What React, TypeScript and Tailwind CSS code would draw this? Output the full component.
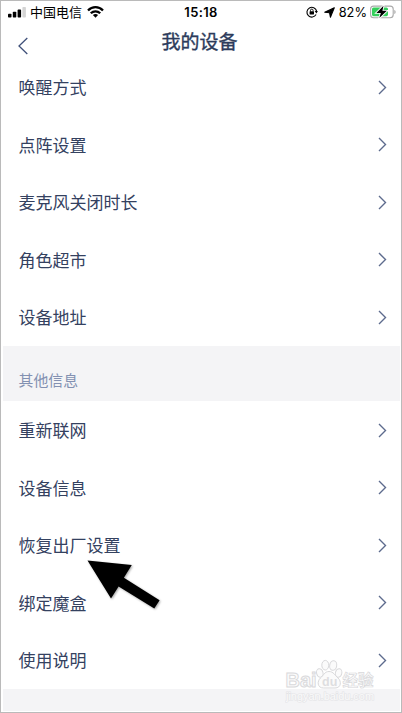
const DEVICE_ROWS = ['唤醒方式', '点阵设置', '麦克风关闭时长', '角色超市', '设备地址']
const OTHER_ROWS = ['重新联网', '设备信息', '恢复出厂设置', '绑定魔盒', '使用说明']

function StatusBar() {
  return (
    <div className="relative flex h-[22px] items-center justify-between pl-[7px] pr-[5px] text-black">
      <div className="flex items-center">
        <svg width="18" height="11" viewBox="0 0 18 11" aria-hidden="true">
          <rect x="0" y="6.7" width="3.5" height="3.8" rx="0.8" />
          <rect x="4.8" y="4.8" width="3.5" height="5.7" rx="0.8" />
          <rect x="9.6" y="2.6" width="3.5" height="7.9" rx="0.8" />
          <rect x="14.4" y="0" width="3.5" height="10.5" rx="0.8" fill="#d4d4d4" />
        </svg>
        <span className="ml-[4px] text-[13px] leading-[22px]">中国电信</span>
        <svg className="ml-[5px]" width="17" height="12" viewBox="0 0 17 12" aria-hidden="true">
          <g fill="none" stroke="#000" strokeWidth="2.3">
            <path d="M1 4.5C5.2.1 11.8.1 16 4.5" />
            <path d="M3.8 7.3C6.5 4.6 10.5 4.6 13.2 7.3" />
          </g>
          <path d="M8.5 11.7 5.9 9.1a3.8 3.8 0 0 1 5.2 0Z" />
        </svg>
      </div>

      <span className="absolute left-1/2 top-0 -translate-x-1/2 font-['Inter'] text-[13px] font-semibold leading-[23px] tracking-[0.35px]">
        15:18
      </span>

      <div className="flex items-center">
        {/* Rotation lock */}
        <svg width="12" height="12" viewBox="0 0 12 12" aria-hidden="true">
          <path d="M10.1 8.6A4.9 4.9 0 1 1 10.6 5" fill="none" stroke="#000" strokeWidth="1.1" />
          <path d="M8.7 5h3.2l-1.5 2.4Z" />
          <rect x="3.6" y="5.3" width="4.4" height="3.2" rx="0.4" />
          <path d="M4.5 5.5V4.4a1.3 1.3 0 0 1 2.6 0v1.1" fill="none" stroke="#000" strokeWidth="0.9" />
        </svg>
        <svg className="ml-[6px]" width="11" height="11" viewBox="0 0 11 11" aria-hidden="true">
          <path d="M10.3.7 6.4 10.2 5.6 5.8.7 5.3Z" stroke="#000" strokeWidth="1.1" strokeLinejoin="round" />
        </svg>
        <span className="ml-[4px] font-['Inter'] text-[12.8px] leading-[23px]">82%</span>
        {/* Battery */}
        <svg className="ml-[3px]" width="26" height="14" viewBox="0 0 26 14" aria-hidden="true">
          <rect x="0.6" y="1.1" width="22.6" height="11.6" rx="3" fill="none" stroke="#a9a9a9" strokeWidth="1.1" />
          <rect x="2" y="2.6" width="16" height="8.6" rx="1.6" fill="#34cf5b" />
          <path d="M24.3 4.9c1.8.7 1.8 3.3 0 4Z" fill="#a9a9a9" />
          <path
            d="M13.5.8 6.4 7.9h4.4L9.3 13.1 16.9 5.8h-4.5Z"
            stroke="#fff"
            strokeWidth="1.8"
            paintOrder="stroke"
          />
        </svg>
      </div>
    </div>
  )
}

function Row({ label }: { label: string }) {
  return (
    <li className="flex h-[57.5px] items-center justify-between pl-[17.5px] pr-[14px]">
      <span className="text-[17px] leading-6">{label}</span>
      <svg width="9" height="15" viewBox="0 0 9 15" aria-hidden="true">
        <path d="M1 1.1 7.5 7.5 1 13.9" fill="none" stroke="#5d6b8d" strokeWidth="1.4" />
      </svg>
    </li>
  )
}

function Watermark() {
  return (
    <div className="absolute left-[284px] top-[657px]" aria-hidden="true">
      <svg width="92" height="50" viewBox="0 0 92 50" fill="#fbfbfb" stroke="#d9d9db" strokeWidth="1">
        <text x="0.5" y="28.8" fontFamily="Liberation Sans, sans-serif" fontSize="20.5" fontWeight="bold" textLength="31" lengthAdjust="spacingAndGlyphs">
          Bai
        </text>
        <ellipse cx="34.8" cy="15" rx="3.2" ry="4.3" transform="rotate(-15 34.8 15)" />
        <ellipse cx="40.3" cy="7.2" rx="3.5" ry="4.8" />
        <ellipse cx="48.2" cy="7.5" rx="3.5" ry="4.8" transform="rotate(10 48.2 7.5)" />
        <ellipse cx="53.6" cy="15" rx="3.2" ry="4.3" transform="rotate(15 53.6 15)" />
        <path d="M44 13.5c-4.5 0-5.5 4-8.5 6.5-3.5 3-3.5 10 3 10h11.5c6.5 0 6.5-7 3-10-3-2.5-4.5-6.5-9-6.5Z" />
        <text x="37" y="28" fontFamily="Liberation Sans, sans-serif" fontSize="12.5" fontWeight="bold" fill="#dedee0" stroke="none">
          du
        </text>
        <text x="57.5" y="28" fontFamily="Noto Sans CJK SC, sans-serif" fontSize="15.5" fontWeight="bold" strokeWidth="0.7">
          经验
        </text>
        <text x="1" y="41.8" fontFamily="Liberation Sans, sans-serif" fontSize="10" fill="#fafafa" stroke="#e4e4e7" strokeWidth="1.2" paintOrder="stroke" textLength="88" lengthAdjust="spacingAndGlyphs">
          jingyan.baidu.com
        </text>
      </svg>
    </div>
  )
}

export default function App() {
  return (
    <div className="relative flex h-[713px] w-[402px] flex-col overflow-hidden border border-[#bababa] bg-white font-['Noto_Sans_CJK_SC',sans-serif] text-[#34415f]">
      <StatusBar />

      <header className="relative flex h-[35.25px] items-start justify-center">
        <button className="absolute left-[16px] top-[14px]" aria-label="返回">
          <svg width="12" height="18" viewBox="0 0 12 18" aria-hidden="true">
            <path d="M10.3 1 2 9l8.3 8" fill="none" stroke="#40517a" strokeWidth="1.3" />
          </svg>
        </button>
        <h1 className="pr-[3px] pt-[4px] text-[19px] font-normal leading-[28px] text-[#2c3b5b] [-webkit-text-stroke:0.35px_#2c3b5b]">
          我的设备
        </h1>
      </header>

      <ul>
        {DEVICE_ROWS.map((label) => (
          <Row key={label} label={label} />
        ))}
      </ul>

      <h2 className="ml-[2px] mr-px h-[55.5px] bg-[#f4f4f6] pl-[15.5px] pt-[22px] text-[14.9px] leading-6 text-[#8391b2]">
        其他信息
      </h2>

      <ul>
        {OTHER_ROWS.map((label) => (
          <Row key={label} label={label} />
        ))}
      </ul>

      <div className="mb-px ml-[2px] mr-px flex-1 bg-[#f4f4f6]" />

      {/* Pointer to the factory reset row */}
      <svg className="absolute left-[84px] top-[556px]" width="80" height="56" viewBox="0 0 80 56" aria-hidden="true">
        <path
          d="M2.5 3.5 46.8 8 38.9 20.8 74.6 43.2 69.3 51.5 33.6 29.5 26 41.5Z"
          className="drop-shadow-[1px_1px_1px_rgba(0,0,0,0.35)]"
        />
      </svg>

      <Watermark />
    </div>
  )
}
